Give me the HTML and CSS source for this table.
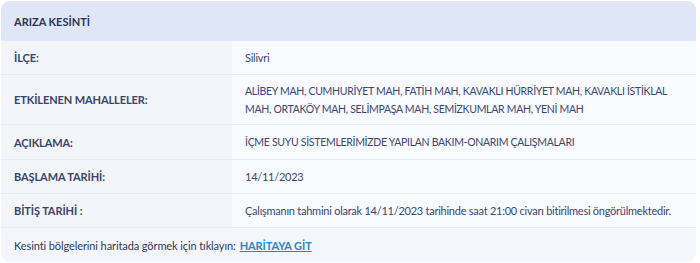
FILE: index.html
```html
<!DOCTYPE html>
<html lang="tr">
<head>
<meta charset="utf-8">
<link rel="stylesheet" href="styles.css">
</head>
<body>
<div class="card">
  <div class="card-head">ARIZA KESİNTİ</div>
  <div class="row r1"><div class="label">İLÇE:</div><div class="value">Silivri</div></div>
  <div class="row r2"><div class="label">ETKİLENEN MAHALLELER:</div><div class="value caps">ALİBEY MAH, CUMHURİYET MAH, FATİH MAH, KAVAKLI HÜRRİYET MAH, KAVAKLI İSTİKLAL MAH, ORTAKÖY MAH, SELİMPAŞA MAH, SEMİZKUMLAR MAH, YENİ MAH</div></div>
  <div class="row r3"><div class="label">AÇIKLAMA:</div><div class="value caps">İÇME SUYU SİSTEMLERİMİZDE YAPILAN BAKIM-ONARIM ÇALIŞMALARI</div></div>
  <div class="row r1"><div class="label">BAŞLAMA TARİHİ:</div><div class="value">14/11/2023</div></div>
  <div class="row r1"><div class="label">BİTİŞ TARİHİ :</div><div class="value">Çalışmanın tahmini olarak 14/11/2023 tarihinde saat 21:00 civarı bitirilmesi öngörülmektedir.</div></div>
  <div class="card-foot">Kesinti bölgelerini haritada görmek için tıklayın: <a href="#" class="map-link">HARİTAYA GİT</a></div>
</div>
</body>
</html>
```
FILE: styles.css
```css
html, body { margin: 0; padding: 0; background: #ffffff; }
* { box-sizing: border-box; }
body { padding: 1px 4px 0 1px; font-family: "Lato", "Noto Sans", sans-serif; font-size: 11px; color: #2e3a5c; }
.card { background: #f4f6fb; border-radius: 9px; overflow: hidden; }
.card-head { height: 40px; display: flex; align-items: center; padding-left: 13px; background: #dfe6f7; font-weight: 700; color: #2b3556; }
.row { display: grid; grid-template-columns: 231px 1fr; border-bottom: 1px solid #e7eaf1; }
.row.r1 { height: 34px; }
.row.r2 { height: 50px; }
.row.r3 { height: 35px; }
.label { display: flex; align-items: center; padding-left: 13px; background: #f3f5fb; font-weight: 700; color: #3a4466; letter-spacing: -0.1px; }
.value { display: flex; align-items: center; padding-left: 13px; padding-right: 6px; background: #fafbfe; color: #3c4670; line-height: 18px; letter-spacing: -0.25px; }
.value.caps { font-size: 10.5px; letter-spacing: -0.3px; }
.card-foot { height: 34px; display: flex; align-items: center; padding-left: 13px; color: #2e3a5c; letter-spacing: -0.1px; }
.map-link { margin-left: 4px; color: #2a86c9; font-weight: 700; text-decoration: underline; }
```
